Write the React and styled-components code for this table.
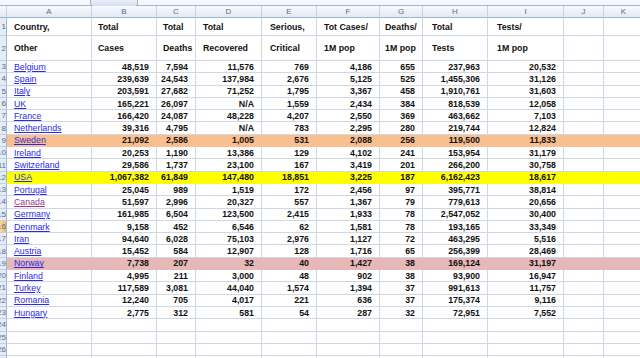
import React from "react"
import styled, {createGlobalStyle} from "styled-components"

const COLS = [7, 85, 65, 39, 66, 55, 63, 43, 65, 76, 40, 40]
const LETTERS = ["A", "B", "C", "D", "E", "F", "G", "H", "I", "J", "K"]
const GRID = "#d0d7e5"
const EDGE = "#9eb6ce"

// left indent of the two title rows, per column
const INDENT = [7, 6, 6, 7, 8, 7, 5, 9, 9, 0, 0]

const TITLES = [
  ["Country,", "Total", "Total", "Total", "Serious,", "Tot Cases/", "Deaths/", "Total", "Tests/"],
  ["Other", "Cases", "Deaths", "Recovered", "Critical", "1M pop", "1M pop", "Tests", "1M pop"]
]

const FILLS = {
  orange: "#fabf8f",
  yellow: "#ffff00",
  pink: "#e6b8b7"
}

const rows = [
  ["Belgium", "48,519", "7,594", "11,576", "769", "4,186", "655", "237,963", "20,532"],
  ["Spain", "239,639", "24,543", "137,984", "2,676", "5,125", "525", "1,455,306", "31,126"],
  ["Italy", "203,591", "27,682", "71,252", "1,795", "3,367", "458", "1,910,761", "31,603"],
  ["UK", "165,221", "26,097", "N/A", "1,559", "2,434", "384", "818,539", "12,058"],
  ["France", "166,420", "24,087", "48,228", "4,207", "2,550", "369", "463,662", "7,103"],
  ["Netherlands", "39,316", "4,795", "N/A", "783", "2,295", "280", "219,744", "12,824"],
  ["Sweden", "21,092", "2,586", "1,005", "531", "2,088", "256", "119,500", "11,833", "orange"],
  ["Ireland", "20,253", "1,190", "13,386", "129", "4,102", "241", "153,954", "31,179"],
  ["Switzerland", "29,586", "1,737", "23,100", "167", "3,419", "201", "266,200", "30,758"],
  ["USA", "1,067,382", "61,849", "147,480", "18,851", "3,225", "187", "6,162,423", "18,617", "yellow"],
  ["Portugal", "25,045", "989", "1,519", "172", "2,456", "97", "395,771", "38,814"],
  ["Canada", "51,597", "2,996", "20,327", "557", "1,367", "79", "779,613", "20,656", null, true],
  ["Germany", "161,985", "6,504", "123,500", "2,415", "1,933", "78", "2,547,052", "30,400"],
  ["Denmark", "9,158", "452", "6,546", "62", "1,581", "78", "193,165", "33,349"],
  ["Iran", "94,640", "6,028", "75,103", "2,976", "1,127", "72", "463,295", "5,516"],
  ["Austria", "15,452", "584", "12,907", "128", "1,716", "65", "256,399", "28,469"],
  ["Norway", "7,738", "207", "32", "40", "1,427", "38", "169,124", "31,197", "pink"],
  ["Finland", "4,995", "211", "3,000", "48", "902", "38", "93,900", "16,947"],
  ["Turkey", "117,589", "3,081", "44,040", "1,574", "1,394", "37", "991,613", "11,757"],
  ["Romania", "12,240", "705", "4,017", "221", "636", "37", "175,374", "9,116"],
  ["Hungary", "2,775", "312", "581", "54", "287", "32", "72,951", "7,552"]
]

const ACTIVE_ROW = 16

const GlobalStyle = createGlobalStyle`
  html, body {
    margin: 0;
    padding: 0;
    background: #ffffff;
  }
  body {
    font-family: "Liberation Sans", Arial, sans-serif;
  }
`

const Sheet = styled.div`
  width: 640px;
  height: 358px;
  overflow: hidden;
  background: #ffffff;
`

const TopBar = styled.div`
  display: flex;
  height: 6px;
  box-sizing: border-box;
  background: #f4f7fb;
  border-bottom: 1px solid ${EDGE};
`

const Tab = styled.div`
  width: 48px;
  margin-left: 90px;
  height: 7px;
  box-sizing: border-box;
  background: linear-gradient(#e9f0f9, #d3def0);
  border: 1px solid ${EDGE};
  border-top: none;
  border-radius: 0 0 4px 4px;
`

const Row = styled.div`
  display: grid;
  grid-template-columns: ${COLS.map(w => w + "px").join(" ")};
  height: ${p => p.$h}px;
  background: ${p => p.$fill || "#ffffff"};
  font-size: 8.8px;
  color: #111111;
`

const Cell = styled.div`
  display: flex;
  align-items: center;
  justify-content: ${p => (p.$right ? "flex-end" : "flex-start")};
  box-sizing: border-box;
  padding: 0 ${p => (p.$right ? 7 : 0)}px 0 ${p => p.$indent || 0}px;
  border-right: 1px solid ${p => (p.$fill ? p.$fill : GRID)};
  border-bottom: 1px solid ${p => (p.$fill ? p.$fill : GRID)};
  font-weight: bold;
  white-space: nowrap;
  overflow: hidden;
`

const ColHead = styled.div`
  display: flex;
  align-items: center;
  justify-content: center;
  box-sizing: border-box;
  background: linear-gradient(#f8fafd, #e2e9f4);
  border-right: 1px solid #c3d1e4;
  border-bottom: 1px solid ${EDGE};
  font-size: 8px;
  color: #5a6a80;
`

const RowHead = styled.div`
  display: flex;
  align-items: center;
  justify-content: flex-end;
  box-sizing: border-box;
  background: ${p => (p.$active ? "linear-gradient(90deg, #f9d9a6, #f3b45e)" : "#e4ecf7")};
  border-right: 1px solid ${EDGE};
  border-bottom: 1px solid #c3d1e4;
  font-size: 8px;
  color: #5a6a80;
  overflow: hidden;
  white-space: nowrap;
`

const Link = styled.a`
  color: ${p => (p.$visited ? "#9a3a8e" : "#2a2ae6")};
  text-decoration: underline;
  font-weight: normal;
  cursor: pointer;
`

const DATA_H = 12.3

function DataRow({num, cells, fill, visited}) {
  const bg = fill ? FILLS[fill] : null
  return (
    <Row $h={DATA_H} $fill={bg}>
      <RowHead $active={num === ACTIVE_ROW}>{num}</RowHead>
      {LETTERS.map((_, i) => {
        if (i === 0) {
          return (
            <Cell key={i} $indent={7} $fill={bg}>
              {cells && <Link $visited={visited}>{cells[0]}</Link>}
            </Cell>
          )
        }
        return (
          <Cell key={i} $right $fill={bg}>
            {cells ? cells[i] : ""}
          </Cell>
        )
      })}
    </Row>
  )
}

export default function App() {
  return (
    <Sheet>
      <GlobalStyle/>
      <TopBar>
        <Tab/>
      </TopBar>

      <Row $h={12}>
        <ColHead/>
        {LETTERS.map(l => (
          <ColHead key={l}>{l}</ColHead>
        ))}
      </Row>

      {TITLES.map((line, r) => (
        <Row key={r} $h={r === 0 ? 18 : 25}>
          <RowHead>{r + 1}</RowHead>
          {LETTERS.map((_, i) => (
            <Cell key={i} $indent={INDENT[i]}>
              {line[i] || ""}
            </Cell>
          ))}
        </Row>
      ))}

      {rows.map((r, i) => (
        <DataRow
          key={r[0]}
          num={i + 3}
          cells={r.slice(0, 9)}
          fill={r[9]}
          visited={r[10]}
        />
      ))}

      {[24, 25, 26, 27].map(n => (
        <DataRow key={n} num={n}/>
      ))}
    </Sheet>
  )
}
